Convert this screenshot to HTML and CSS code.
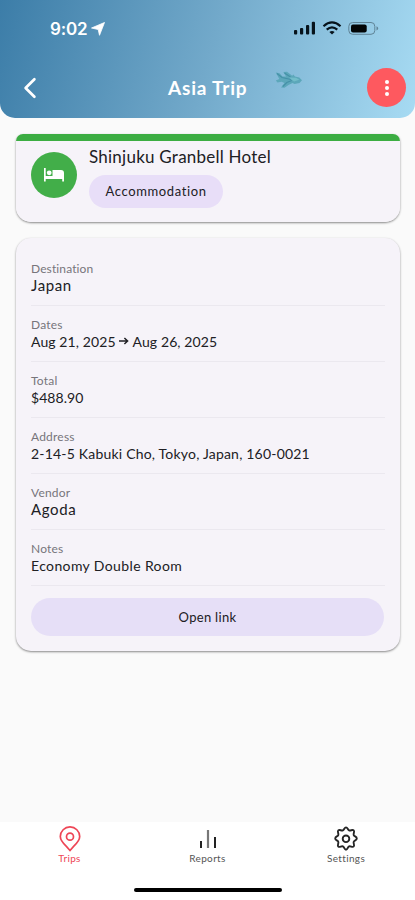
FILE: index.html
```html
<!DOCTYPE html>
<html lang="en">
<head>
<meta charset="utf-8">
<meta name="viewport" content="width=device-width, initial-scale=1">
<title>Asia Trip</title>
<link rel="stylesheet" href="styles.css">
</head>
<body>
<div class="screen">
  <header class="header">
    <div class="status">
      <span class="time">9:02</span>
      <svg class="location" width="14" height="14" viewBox="0 0 14 14"><path d="M13.5.5 8.5 13.3 7.2 7.5.5 6Z" fill="#fff" stroke="#fff" stroke-width=".8" stroke-linejoin="round"/></svg>
      <svg class="indicators" width="86" height="16" viewBox="0 0 86 16">
        <g fill="#07131b"><rect x="0" y="9" width="3.2" height="4.5" rx="1"/><rect x="6" y="7" width="3.2" height="6.5" rx="1"/><rect x="12" y="4" width="3.2" height="9.5" rx="1"/><rect x="17.8" y=".8" width="3.2" height="12.7" rx="1"/></g>
        <g fill="none" stroke="#07131b" stroke-width="2.2"><path d="M29.5 5.2Q38-2.3 46.5 5.2"/><path d="M32.7 8.6Q38 4 43.3 8.6"/></g>
        <path d="M35.4 11Q38 9 40.6 11L38 13.6Z" fill="#07131b"/>
        <rect x="54.8" y="1.5" width="26" height="11.8" rx="3.8" fill="none" stroke="#5f8396"/>
        <rect x="57" y="3.5" width="15.7" height="8" rx="2" fill="#020506"/>
        <path d="M82.5 5.2Q86 7.3 82.5 9.5Z" fill="#5f8396"/>
      </svg>
    </div>
    <div class="toolbar">
      <svg class="back" width="14" height="22" viewBox="0 0 14 22"><path d="M11.4 2.2 2.6 11l8.8 8.8" fill="none" stroke="#fff" stroke-width="2.7" stroke-linecap="round" stroke-linejoin="round"/></svg>
      <h1>Asia Trip</h1>
      <svg class="plane" width="28" height="18" viewBox="0 0 28 18"><path d="M.8 1.500 4.500 2.200 7.500 5.500 11 5.500 8.300 1 12 .8 17.200 4.800 18.300 3.500 20 5.500 24.300 6.500 27 9.300 24.500 12 19.500 13 17.500 12 13.500 14 9.500 16.800 6 16.500 9.500 12 6.500 10.800 2.500 11.500 .8 9.500 4.300 8.100Z" fill="#5ca7ba"/><path d="m2 2.500 5 4 9 2M9.500 2l6 4M7.800 15.500l4-4 5-2" fill="none" stroke="#4590a7" stroke-width="1.1"/><path d="m14 6.500 7 .2 3.300 2L19 10.500Z" fill="#72bdc9"/></svg>
      <button class="menu" aria-label="Trip options"><svg width="6" height="16" viewBox="0 0 6 16" fill="#fff"><circle cx="3" cy="2.1" r="2"/><circle cx="3" cy="8" r="2"/><circle cx="3" cy="13.9" r="2"/></svg></button>
    </div>
  </header>

  <main>
    <section class="card hotel">
      <div class="badge"><svg width="20" height="14" viewBox="0 0 20 14" fill="#fff"><path d="M0 0h1.700v8H8.500V2h8.500q3 0 3 3v8.500h-1.800V11H1.700v2.500H0Z"/><circle cx="5.200" cy="4.800" r="2.400"/></svg></div>
      <div class="hotel-info"><h2>Shinjuku Granbell Hotel</h2><span class="chip">Accommodation</span></div>
    </section>

    <section class="card details">
      <dl>
        <div class="row"><dt class="destination">Destination</dt><dd class="japan">Japan</dd></div>
        <div class="row"><dt>Dates</dt><dd class="dates">Aug 21, 2025 <svg width="10" height="10" viewBox="0 0 10 10"><path d="M0 4h8M5.400 1 8.600 4 5.400 7" fill="none" stroke="#202024" stroke-width="1.500"/></svg> Aug 26, 2025</dd></div>
        <div class="row"><dt>Total</dt><dd class="total">$488.90</dd></div>
        <div class="row"><dt>Address</dt><dd class="address">2-14-5 Kabuki Cho, Tokyo, Japan, 160-0021</dd></div>
        <div class="row"><dt>Vendor</dt><dd class="vendor">Agoda</dd></div>
        <div class="row"><dt>Notes</dt><dd class="notes">Economy Double Room</dd></div>
      </dl>
      <button class="open">Open link</button>
    </section>
  </main>

  <footer>
    <nav>
      <a class="active"><svg width="22" height="26" viewBox="0 0 22 26" fill="none" stroke="currentColor" stroke-width="1.7"><path d="M11 24.500 7.600 20.700C3.800 17.100 1.300 14.500 1.300 10.600a9.700 9.700 0 0 1 19.400 0c0 3.900-2.500 6.500-6.300 10.100Z"/><circle cx="11" cy="10.700" r="3.500"/></svg><span>Trips</span></a>
      <a><svg width="22" height="26" viewBox="0 0 22 26" fill="none" stroke-width="2"><path d="M4 15v7M18 11v11" stroke="#222"/><path d="M11 4v18" stroke="#777" stroke-width="2.200"/></svg><span>Reports</span></a>
      <a><svg width="26" height="26" viewBox="1.2 .9 23.6 23.6" fill="none" stroke="#252525" stroke-width="1.7" stroke-linejoin="round"><path d="M13 2.100c1.500 0 1.400 2.200 2.800 2.800s3-1.200 4.200 0-.6 2.800 0 4.200 2.800 1.300 2.800 3.100-2.200 1.500-2.800 3 1.100 3.100 0 4.300-2.800-.7-4.200-.1-1.300 3.100-2.800 3.100-1.400-2.500-2.800-3.100-3 1.200-4.200.1.600-2.900 0-4.300-2.800-1.200-2.800-3S5.400 10.500 6 9.100 4.800 6.100 6 4.900s2.800.6 4.200 0S11.500 2.100 13 2.100Z"/><circle cx="13" cy="12.500" r="3"/></svg><span>Settings</span></a>
    </nav>
    <div class="home"></div>
  </footer>
</div>
</body>
</html>
```
FILE: styles.css
```css
* { box-sizing: border-box; }
body { margin: 0; font-family: Lato, "Liberation Sans", sans-serif; color: #202024; background: #fafafa; }
h1, h2, dl, dd { margin: 0; }
button { border: 0; padding: 0; font: inherit; color: inherit; }
svg { display: block; flex: none; }
.screen { width: 415px; height: 900px; display: flex; flex-direction: column; overflow: hidden; background: #fafafa; }
.header { height: 118px; flex: none; border-radius: 0 0 15px 15px; background: linear-gradient(105deg, #3c7da8 0%, #72a9ca 50%, #a7dbf3 100%); }
.status { height: 57px; display: flex; align-items: center; padding: 0 35px 0 50px; }
.time { color: #fff; font: 600 17px/20px Inter, sans-serif; letter-spacing: -.2px; }
.location { margin-left: 4px; }
.indicators { margin-left: auto; }
.toolbar { height: 61px; display: grid; grid-template-columns: 145px 101px 30px 1fr 39px; align-items: center; padding: 0 9px 0 23px; }
h1 { color: #fff; font-size: 19px; line-height: 24px; font-weight: 700; letter-spacing: .8px; white-space: nowrap; }
.plane { margin: -15px 0 0 6px; }
.menu { grid-column: 5; width: 39px; height: 39px; border-radius: 50%; display: grid; place-items: center; background: #fe595f; }
main { flex: 1; padding: 16px 15px 0 16px; }
.card { background: #f6f3f9; border-radius: 15px; box-shadow: 0 1px 2px rgba(0,0,0,.36), 0 1px 3px rgba(0,0,0,.12); }
.hotel { height: 88px; display: flex; gap: 12px; padding: 10px 15px 0; overflow: hidden; background: linear-gradient(#3cad42 7px, #f6f3f9 7px); border-radius: 7px 7px 15px 15px; }
.badge { width: 46px; height: 46px; margin-top: 8px; border-radius: 50%; background: #42ae49; display: grid; place-items: center; }
h2 { font-weight: 400; font-size: 17px; line-height: 26px; letter-spacing: .24px; white-space: nowrap; }
.chip { display: flex; align-items: center; justify-content: center; width: 134px; height: 33px; margin-top: 5px; padding-bottom: 1px; border-radius: 17px; background: #e8def8; font-size: 13px; letter-spacing: .62px; }
.details { height: 413px; margin-top: 16px; padding: 12px 15px 0; }
.row { height: 56px; padding-top: 11px; border-bottom: 1px solid #ebe8ef; white-space: nowrap; }
dt { color: #77757b; font-size: 12px; line-height: 16px; letter-spacing: .2px; }
dt.destination { letter-spacing: .12px; }
dd { font-size: 14px; line-height: 17px; letter-spacing: .2px; }
.japan, .vendor { font-size: 15px; line-height: 16px; letter-spacing: .6px; }
.total { letter-spacing: .05px; }
.notes { letter-spacing: .38px; }
.dates { letter-spacing: .1px; }
.dates svg { display: inline-block; }
.open { display: block; width: 353px; height: 38px; margin-top: 12px; padding-bottom: 1px; border-radius: 19px; background: #e6dff7; font-size: 13px; letter-spacing: .3px; }
footer { height: 78px; flex: none; background: #fff; }
nav { height: 44px; display: grid; grid-template-columns: 138px 139px 138px; padding-top: 4px; }
nav a { display: flex; flex-direction: column; align-items: center; color: #555; }
nav .active { color: #ee4656; padding-left: 1px; }
nav span { font-size: 10px; line-height: 13px; letter-spacing: .35px; }
.home { width: 148px; height: 4px; margin: 22px auto 0; border-radius: 2px; background: #000; }
```
